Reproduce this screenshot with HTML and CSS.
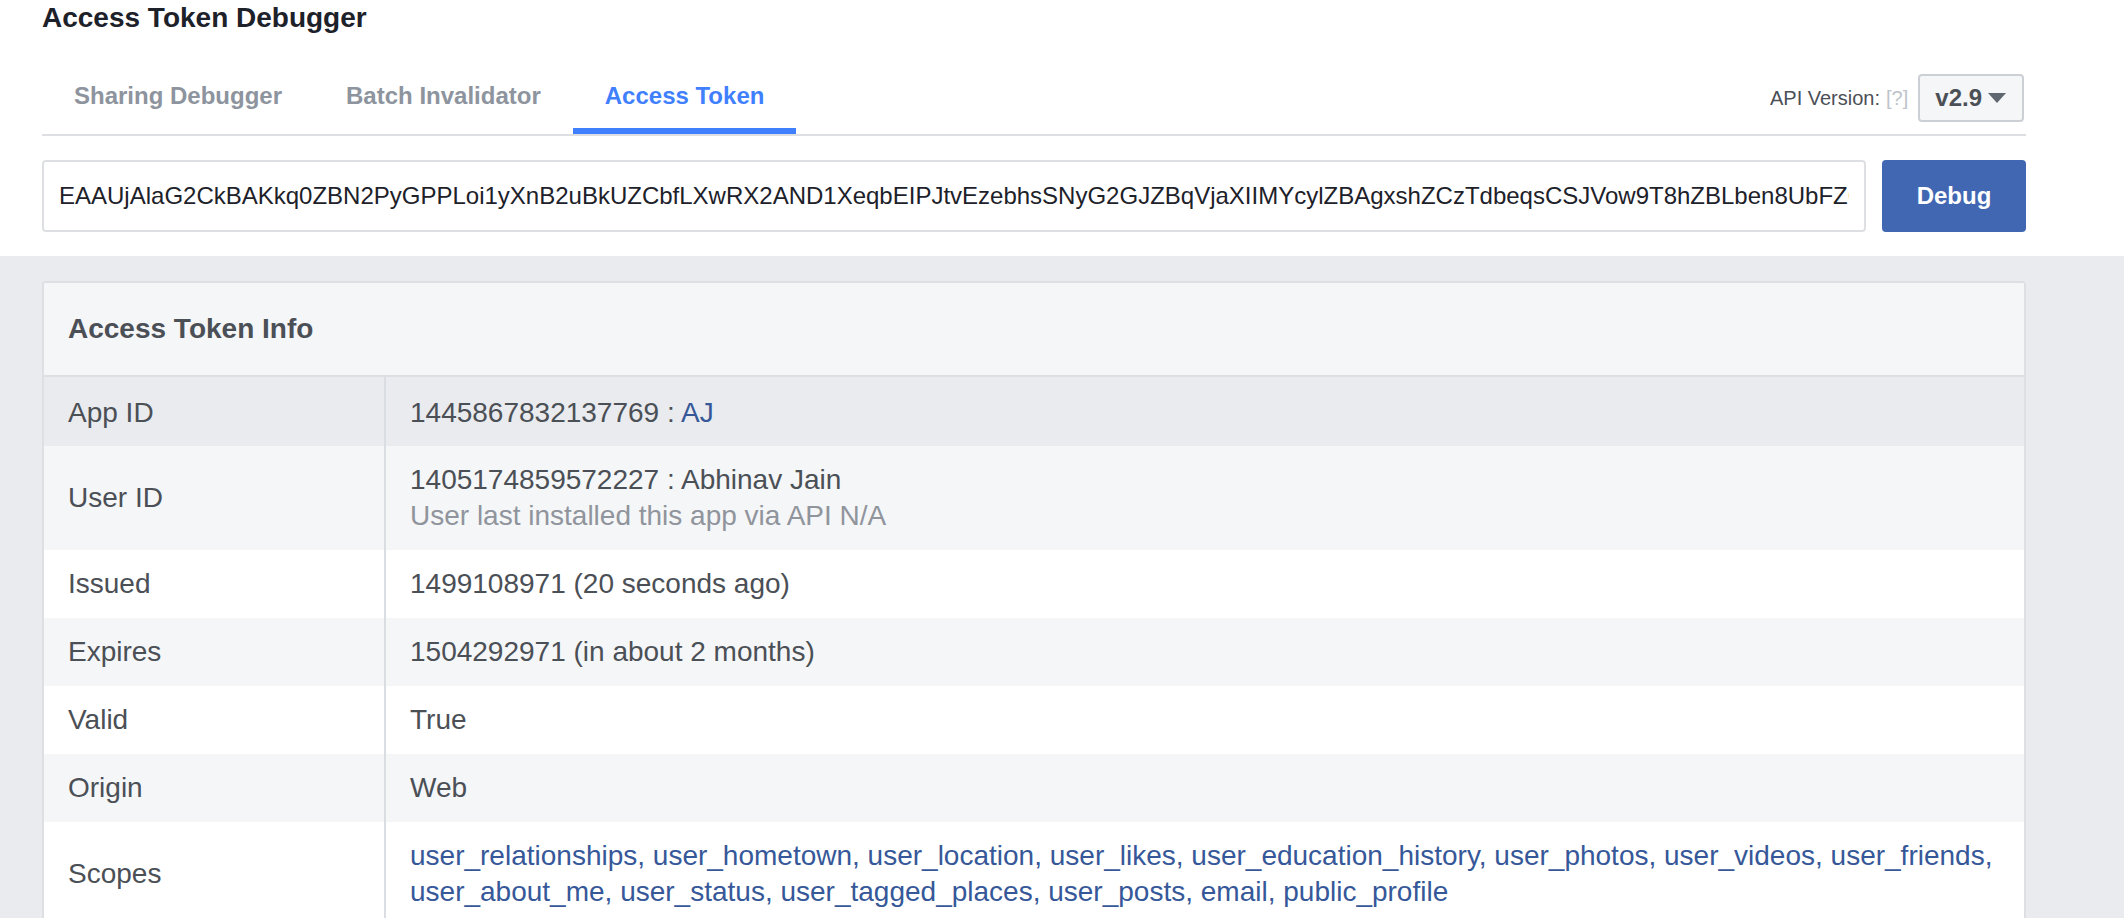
FILE: index.html
```html
<!DOCTYPE html>
<html lang="en">
<head>
<meta charset="utf-8">
<title>Access Token Debugger</title>
<link rel="stylesheet" href="styles.css">
</head>
<body>
<div class="top">
  <div class="wrap">
    <h1 class="title">Access Token Debugger</h1>
    <div class="tabbar">
      <nav class="tabs">
        <a class="tab">Sharing Debugger</a>
        <a class="tab">Batch Invalidator</a>
        <a class="tab active">Access Token</a>
      </nav>
      <div class="version">
        <span class="version-label">API Version:</span>
        <span class="help">[?]</span>
        <div class="select"><span>v2.9</span><span class="caret"></span></div>
      </div>
    </div>
    <div class="searchrow">
      <input class="token" type="text" value="EAAUjAlaG2CkBAKkq0ZBN2PyGPPLoi1yXnB2uBkUZCbfLXwRX2AND1XeqbEIPJtvEzebhsSNyG2GJZBqVjaXIIMYcylZBAgxshZCzTdbeqsCSJVow9T8hZBLben8UbFZCZAZDZDQwerty">
      <button class="debug">Debug</button>
    </div>
  </div>
</div>
<div class="main">
  <div class="wrap">
    <section class="card">
      <header class="card-head">Access Token Info</header>
      <div class="row first hover">
        <div class="key">App ID</div>
        <div class="val">1445867832137769 : <a class="link">AJ</a></div>
      </div>
      <div class="row alt">
        <div class="key">User ID</div>
        <div class="val">1405174859572227 : Abhinav Jain<div class="muted">User last installed this app via API N/A</div></div>
      </div>
      <div class="row">
        <div class="key">Issued</div>
        <div class="val">1499108971 (20 seconds ago)</div>
      </div>
      <div class="row alt">
        <div class="key">Expires</div>
        <div class="val">1504292971 (in about 2 months)</div>
      </div>
      <div class="row">
        <div class="key">Valid</div>
        <div class="val">True</div>
      </div>
      <div class="row alt">
        <div class="key">Origin</div>
        <div class="val">Web</div>
      </div>
      <div class="row">
        <div class="key">Scopes</div>
        <div class="val scopes"><a class="link">user_relationships</a>, <a class="link">user_hometown</a>, <a class="link">user_location</a>, <a class="link">user_likes</a>, <a class="link">user_education_history</a>, <a class="link">user_photos</a>, <a class="link">user_videos</a>, <a class="link">user_friends</a>, <a class="link">user_about_me</a>, <a class="link">user_status</a>, <a class="link">user_tagged_places</a>, <a class="link">user_posts</a>, <a class="link">email</a>, <a class="link">public_profile</a></div>
      </div>
    </section>
  </div>
</div>
</body>
</html>
```

FILE: styles.css
```css
html, body {
  margin: 0;
  padding: 0;
  overflow: hidden;
  background: #e9ebee;
}

body {
  font-family: "Liberation Sans", Arial, Helvetica, sans-serif;
  color: #1d2129;
}

.wrap {
  margin-left: 42px;
  width: 1984px;
}

.top {
  background: #ffffff;
}

.title {
  margin: 0;
  font-size: 28px;
  font-weight: bold;
  line-height: 36px;
  color: #1d2129;
}

.tabbar {
  display: flex;
  justify-content: space-between;
  align-items: flex-end;
  height: 98px;
  border-bottom: 2px solid #dddfe2;
}

.tabs {
  display: flex;
}

.tab {
  display: block;
  padding: 0 32px 16px;
  line-height: 32px;
  font-size: 24px;
  font-weight: bold;
  color: #8d949e;
  border-bottom: 6px solid transparent;
  cursor: pointer;
}

.tab.active {
  color: #4080ff;
  border-bottom-color: #4080ff;
}

.version {
  display: flex;
  align-items: center;
  margin-bottom: 12px;
  margin-right: 2px;
  font-size: 20px;
  line-height: 24px;
}

.version-label {
  color: #4b4f56;
  margin-right: 6px;
}

.help {
  color: #bec3c9;
  margin-right: 10px;
}

.select {
  box-sizing: border-box;
  height: 48px;
  display: flex;
  align-items: center;
  gap: 6px;
  padding: 0 16px 0 15px;
  border: 2px solid #ccd0d5;
  border-radius: 4px;
  background: #f5f6f7;
  font-size: 24px;
  font-weight: bold;
  color: #4b4f56;
}

.caret {
  width: 0;
  height: 0;
  border-left: 9px solid transparent;
  border-right: 9px solid transparent;
  border-top: 10px solid #606770;
}

.searchrow {
  display: flex;
  gap: 16px;
  padding: 24px 0;
}

.token {
  flex: 1;
  box-sizing: border-box;
  height: 72px;
  margin: 0;
  padding: 0 15px;
  border: 2px solid #dddfe2;
  border-radius: 4px;
  font-family: "Liberation Sans", Arial, Helvetica, sans-serif;
  font-size: 24px;
  color: #1d2129;
  background: #ffffff;
  outline: none;
}

.debug {
  box-sizing: border-box;
  width: 144px;
  height: 72px;
  margin: 0;
  border: 2px solid #4267b2;
  border-radius: 4px;
  background: #4267b2;
  color: #ffffff;
  font-family: "Liberation Sans", Arial, Helvetica, sans-serif;
  font-size: 24px;
  font-weight: bold;
}

.main {
  background: #e9ebee;
  padding-top: 25px;
}

.card {
  box-sizing: border-box;
  background: #ffffff;
  border: 2px solid #dddfe2;
  border-radius: 4px;
  overflow: hidden;
}

.card-head {
  padding: 28px 24px;
  background: #f5f6f7;
  border-bottom: 2px solid #dddfe2;
  font-size: 28px;
  font-weight: bold;
  line-height: 36px;
  color: #4b4f56;
}

.row {
  display: grid;
  grid-template-columns: 340px 1fr;
  font-size: 28px;
  line-height: 36px;
  color: #4b4f56;
  background: #ffffff;
}

.row.alt {
  background: #f5f6f7;
}

.row.hover {
  background: #e9ebee;
}

.key {
  display: flex;
  align-items: center;
  padding: 16px 24px;
}

.val {
  padding: 16px 16px 16px 24px;
  border-left: 2px solid #dadde1;
}

.row.first .key,
.row.first .val {
  padding-top: 18px;
  padding-bottom: 15px;
}

.muted {
  color: #90949c;
}

.link {
  color: #365899;
  text-decoration: none;
  cursor: pointer;
}

.scopes {
  color: #365899;
}
```
